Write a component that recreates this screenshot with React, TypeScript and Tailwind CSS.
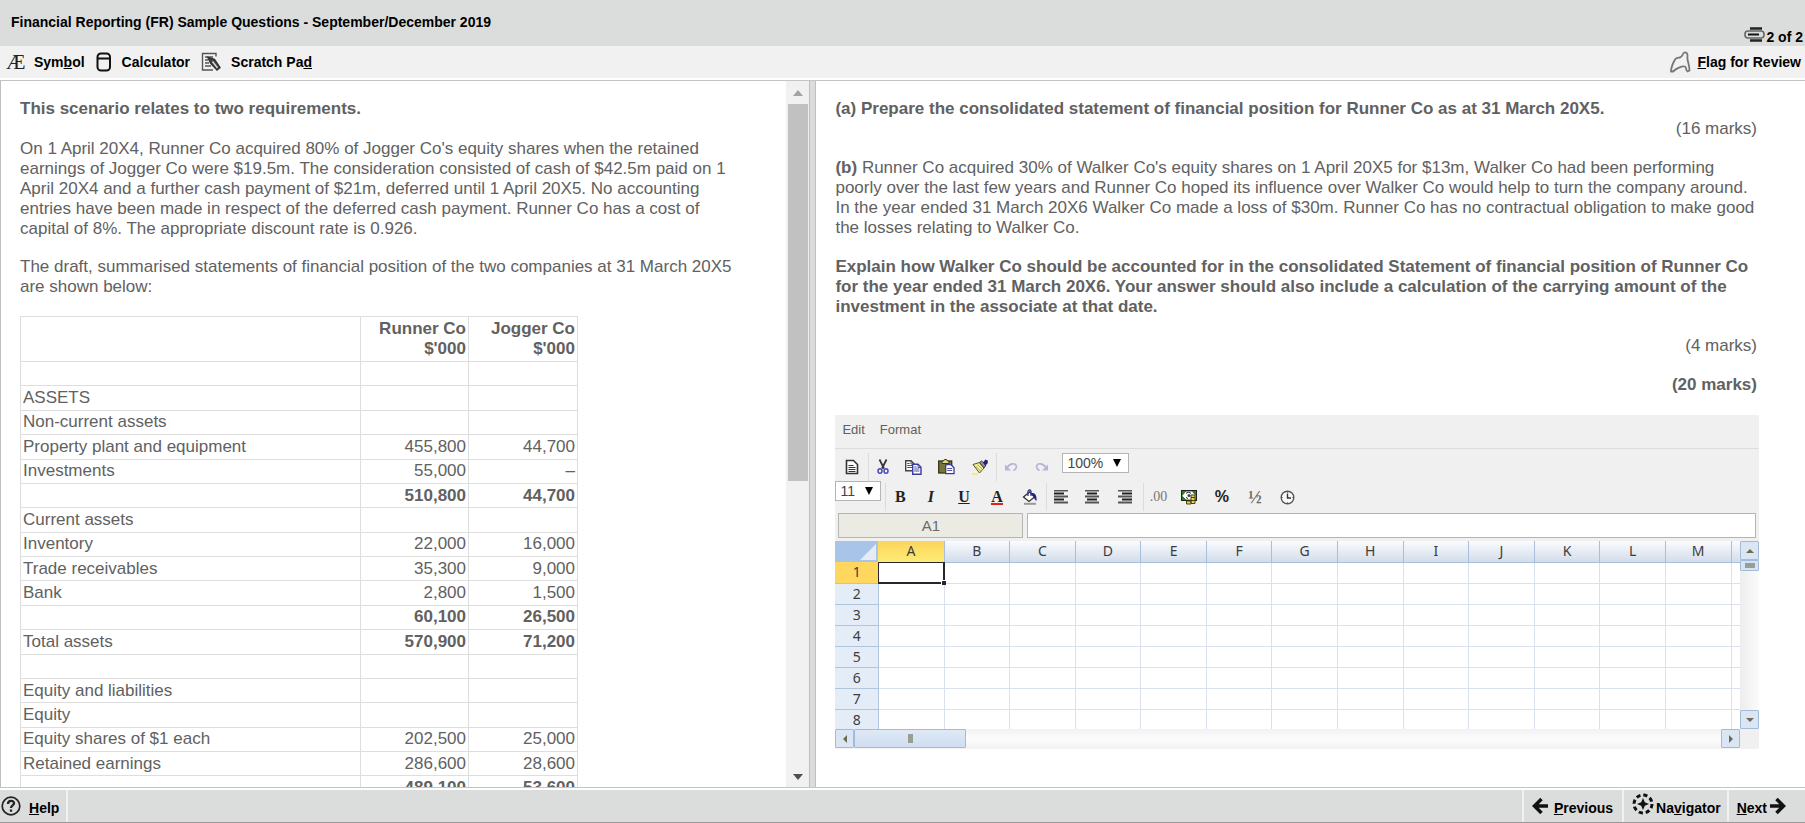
import React from "react";

type Row = [string, string, string, boolean?];
const rows: Row[] = [
  ["", "", ""],
  ["ASSETS", "", ""],
  ["Non-current assets", "", ""],
  ["Property plant and equipment", "455,800", "44,700"],
  ["Investments", "55,000", "–"],
  ["", "510,800", "44,700", true],
  ["Current assets", "", ""],
  ["Inventory", "22,000", "16,000"],
  ["Trade receivables", "35,300", "9,000"],
  ["Bank", "2,800", "1,500"],
  ["", "60,100", "26,500", true],
  ["Total assets", "570,900", "71,200", true],
  ["", "", ""],
  ["Equity and liabilities", "", ""],
  ["Equity", "", ""],
  ["Equity shares of $1 each", "202,500", "25,000"],
  ["Retained earnings", "286,600", "28,600"],
  ["", "489,100", "53,600", true],
];
const columns = "ABCDEFGHIJKLM".split("");
const sheetRows = [1, 2, 3, 4, 5, 6, 7, 8];

function Tool({ label, first, children }: { label: string; first?: boolean; children: React.ReactNode }) {
  return (
    <button aria-label={label} title={label} className={`flex h-7 items-center justify-center ${first ? "w-7" : "w-[33px]"}`}>
      {children}
    </button>
  );
}

const Divider = () => <div className="ml-[2px] h-7 w-px bg-[#dcdcdc]" />;

function Drop({ label, value, className }: { label: string; value: string; className: string }) {
  return (
    <div className={`relative h-5 ${className}`}>
      <select aria-label={label} className="block h-5 w-full appearance-none border border-[#b5b5b5] bg-white pl-1 text-sm leading-[18px] text-[#444]">
        <option>{value}</option>
      </select>
      <svg width="8" height="8" className="pointer-events-none absolute top-[6px] right-2" fill="#000">
        <path d="M0 0h8l-4 8z" />
      </svg>
    </div>
  );
}

const Align = ({ from, to }: { from: number; to: number }) => (
  <svg width="16" height="14">
    {[1, 4, 7, 10, 13].map((y, i) => (
      <line key={y} x1={i % 2 ? from : 1} x2={i % 2 ? to : 15} y1={y - 0.5} y2={y - 0.5} stroke={i % 2 ? "#222" : "#555"} strokeWidth="2" />
    ))}
  </svg>
);

const Page = ({ x, y, c }: { x: number; y: number; c: string }) => (
  <g transform={`translate(${x} ${y})`}>
    <path d="M.7 .7h5.300l3 3v7h-8.300z" fill="#fff" stroke={c} strokeWidth="1.400" />
    <path d="M2.200 3.500h2.500M2.200 5.500h5.200M2.200 7.500h5.200M6 1v3h3" fill="none" stroke={c} strokeWidth=".9" />
  </g>
);

function ScrollButton({ label, d, className }: { label: string; d: string; className?: string }) {
  return (
    <button aria-label={label} className={`flex h-[19px] w-[19px] shrink-0 items-center justify-center rounded-[1px] border border-[#a3bbd8] bg-[#dbe6f4] ${className ?? ""}`}>
      <svg width="8" height="8" fill="#6b6e50">
        <path d={d} />
      </svg>
    </button>
  );
}

function Spreadsheet() {
  return (
    <div className="mt-5 bg-[#f0f0f0]">
      <div className="flex h-[34px] gap-[15px] border-b border-[#dcdcdc] pt-[5px] pl-[7px] text-[13px]">
        <button className="h-5">Edit</button>
        <button className="h-5">Format</button>
      </div>
      <div className="flex h-8 items-start pt-1">
        <Tool label="New">
          <svg width="14" height="16" fill="#fff" stroke="#333" strokeWidth="1.600">
            <path d="M1.500 1.500h7l4 4v9h-11z" />
            <path d="M3.500 6.500h5M3.500 8.500h7M3.500 10.500h7M3.500 12.500h7" strokeWidth="1" />
          </svg>
        </Tool>
        <div className="h-7 w-px bg-[#dcdcdc]" />
        <Tool label="Cut" first>
          <svg width="12" height="16" fill="none">
            <path d="M2.500 .5L7 9.500M9.500 .5L5 9.500" stroke="#333" strokeWidth="1.700" />
            <ellipse cx="3" cy="12" rx="2" ry="2.300" stroke="#4a4ab4" strokeWidth="1.500" />
            <ellipse cx="9" cy="12" rx="2" ry="2.300" stroke="#4a4ab4" strokeWidth="1.500" />
          </svg>
        </Tool>
        <Tool label="Copy">
          <svg width="17" height="15">
            <Page x={0} y={0} c="#444" />
            <Page x={7} y={3.5} c="#3b3b9c" />
          </svg>
        </Tool>
        <Tool label="Paste">
          <svg width="17" height="16">
            <rect x=".7" y="2" width="13" height="12" fill="#77753a" stroke="#35341c" strokeWidth="1.300" />
            <path d="M4 4.500V2h1.500L6.500 .5h2L9.500 2H11v2.500z" fill="#e0dc82" stroke="#333" />
            <g transform="translate(7 5)">
              <path d="M.7 .7h5.300l3 3v6h-8.300z" fill="#fff" stroke="#3b3b9c" strokeWidth="1.300" />
              <path d="M2.200 4.500h5M2.200 6.500h5" stroke="#3b3b9c" strokeWidth=".9" />
            </g>
          </svg>
        </Tool>
        <Tool label="Format painter">
          <svg width="18" height="16">
            <path d="M1 15h6" stroke="#f2ea60" strokeWidth="1.500" />
            <path d="M2 5.500L8.500 3.500 13 9 8.500 14z" fill="#f4eda0" stroke="#55552e" />
            <path d="M4.500 7l5 5M6.500 5.500l5 5" stroke="#b8ad30" />
            <path d="M8.500 3.500l2-1.500 4.500 4-2 3z" fill="#999" stroke="#333" />
            <path d="M12 3.500L14.500 .5l2.500 1.200-.5 3-2.500 1.800z" fill="#23237e" />
          </svg>
        </Tool>
        <div className="h-7 w-px bg-[#dcdcdc]" />
        <Tool label="Undo" first>
          <svg width="14" height="10" fill="none" stroke="#b4b4d8" strokeWidth="1.600">
            <path d="M3 6C5 1.500 12 0 12.500 4.500c0 2-1 3-3 4" />
            <path d="M1 2.500v6h6z" fill="#b4b4d8" stroke="none" />
          </svg>
        </Tool>
        <Tool label="Redo">
          <svg width="14" height="10" fill="none" stroke="#b4b4d8" strokeWidth="1.600">
            <path d="M11 6C9 1.500 2 0 1.500 4.500c0 2 1 3 3 4" />
            <path d="M13 2.500v6H7z" fill="#b4b4d8" stroke="none" />
          </svg>
        </Tool>
        <Drop label="Zoom" value="100%" className="ml-1 w-[67px]" />
      </div>
      <div className="flex h-8 items-start font-['Liberation_Serif',serif] text-base text-[#222]">
        <Drop label="Font size" value="11" className="w-[46px] font-['Liberation_Sans',Arial,sans-serif]" />
        <div className="flex pt-[2px] pl-[2px]">
          <Divider />
          <Tool label="Bold" first><b>B</b></Tool>
          <Tool label="Italic"><b><i>I</i></b></Tool>
          <Tool label="Underline"><b><u>U</u></b></Tool>
          <Tool label="Font colour"><b className="border-b-2 border-[#e02020] leading-[13px]">A</b></Tool>
          <Tool label="Fill colour">
            <svg width="16" height="16">
              <path d="M2 14.800h12" stroke="#999" strokeWidth="2" />
              <path d="M1.500 8L7.500 3l5 5-5.500 4.500z" fill="#fff" stroke="#333" strokeWidth="1.300" />
              <path d="M6 7V2.500C6 .5 9 .5 9 2.500V7" fill="none" stroke="#35358c" strokeWidth="1.300" />
              <path d="M9 4c4-.5 6 2 5.500 8-2-1-2.500-4-3.500-5z" fill="#23237e" />
            </svg>
          </Tool>
          <div className="h-7 w-px bg-[#dcdcdc]" />
          <Tool label="Align left" first><Align from={1} to={11} /></Tool>
          <Tool label="Align centre"><Align from={3} to={13} /></Tool>
          <Tool label="Align right"><Align from={5} to={15} /></Tool>
          <Divider />
          <Tool label="Decimal places" first><span className="text-sm text-[#777]">.00</span></Tool>
          <Tool label="Currency">
            <svg width="16" height="15">
              <rect x=".7" y=".7" width="14.600" height="9.600" fill="#fff" stroke="#222" strokeWidth="1.400" />
              <path d="M1.500 1.500h3L1.500 5zM14.500 1.500h-3l3 3.500zM1.500 9.500V6.500l3 3z" fill="#2c7a2c" stroke="#2c7a2c" />
              <path d="M5 3.500c1-1.500 4-1.500 5 0M5 7.500l2 1" fill="none" stroke="#222" />
              <circle cx="8" cy="5.500" r="1.500" fill="#444" />
              <path d="M10 5h4v8.500h-4zM5.500 11h4.500v3H5.500z" fill="#e2d24a" stroke="#4c4515" />
              <path d="M10 7.500h4M10 10.500h4" stroke="#4c4515" />
            </svg>
          </Tool>
          <Tool label="Percent"><b className="font-['Liberation_Sans',Arial,sans-serif]">%</b></Tool>
          <Tool label="Fraction"><span className="text-lg font-bold text-[#666]">½</span></Tool>
          <Tool label="Time">
            <svg width="15" height="15" fill="#fafafa" stroke="#555" strokeWidth="1.400">
              <circle cx="7.500" cy="7.500" r="6.300" />
              <path d="M7.500 3.500V8h3.500" fill="none" stroke="#333" />
              <path d="M7.500 1.500v1.200M7.500 12.300v1.200M1.500 7.500h1.200M12.300 7.500h1.200" strokeWidth="1" />
            </svg>
          </Tool>
        </div>
      </div>
      <div className="flex gap-1 px-[3px] pb-[3px]">
        <input aria-label="Cell reference" readOnly defaultValue="A1" className="h-[25px] w-[185px] border border-[#b5b5b5] bg-[#ebebe4] text-center text-[15px] text-[#6b6b6b]" />
        <input aria-label="Formula" className="h-[25px] min-w-0 flex-1 border border-[#b5b5b5] bg-white px-1 text-[15px]" />
      </div>
      <div className="flex h-[188px]">
        <div className="min-w-0 flex-1 overflow-hidden bg-white font-['Noto_Sans',sans-serif] text-sm leading-[18px] text-[#3c3c3c]">
          <table className="w-full table-fixed border-collapse">
            <thead>
              <tr className="h-[21px] bg-linear-to-b from-[#fafcfe] to-[#d3dcea]">
                <td className="w-[43px] bg-[#a9c4e9] p-0">
                  <svg width="16" height="16" className="mr-[2px] ml-auto"><path d="M16 0v16H0z" fill="#e6ecf4" /></svg>
                </td>
                {columns.map((c) => (
                  <th key={c} scope="col" className={`border-r border-b border-[#a9bfd9] p-0 font-normal ${c === "A" ? "bg-linear-to-b from-[#fbd55c] to-[#ffeb74]" : ""}`}>
                    {c}
                  </th>
                ))}
                <td className="w-[9px] border-b border-[#a9bfd9] p-0" />
              </tr>
            </thead>
            <tbody>
              {sheetRows.map((r) => (
                <tr key={r} className="h-[21px]">
                  <th scope="row" className={`border-r border-b border-[#b0c6de] p-0 font-normal ${r === 1 ? "bg-[#ffd75e]" : "bg-[#e4ecf7]"}`}>{r}</th>
                  {columns.map((c) => (
                    <td key={c} className="relative border-r border-b border-[#dae1ee] p-0">
                      {r === 1 && c === "A" && (
                        <div className="absolute -inset-px border-t border-r-2 border-b-2 border-l border-[#26262e]">
                          <div className="absolute -right-[3px] -bottom-[3px] h-[5px] w-[5px] border-t border-l border-white bg-[#26262e]" />
                        </div>
                      )}
                    </td>
                  ))}
                  <td className="border-b border-[#dae1ee] p-0" />
                </tr>
              ))}
            </tbody>
          </table>
        </div>
        <div className="flex w-[19px] flex-col bg-linear-to-r from-[#ededed] to-[#fbfbfb]">
          <ScrollButton label="Scroll up" d="M0 6l4-4 4 4z" />
          <div className="flex h-[11px] items-center justify-center rounded-[1px] border border-[#a3bbd8] bg-[#d6e3f3]">
            <div className="h-[5px] w-[10px] bg-[#999e94]" />
          </div>
          <ScrollButton label="Scroll down" d="M0 2l4 4 4-4z" className="mt-auto" />
        </div>
      </div>
      <div className="flex h-5 pr-[19px]">
        <div className="flex flex-1 bg-linear-to-b from-[#f2f2f2] via-[#fcfcfc] to-[#f2f2f2]">
          <ScrollButton label="Scroll left" d="M6 0l-4 4 4 4z" />
          <div className="flex h-[19px] w-[112px] items-center justify-center rounded-[1px] border border-[#a3bbd8] bg-linear-to-b from-[#dfe9f6] to-[#cfdef0]">
            <div className="h-[9px] w-[5px] bg-[#999e94]" />
          </div>
          <ScrollButton label="Scroll right" d="M2 0l4 4-4 4z" className="ml-auto" />
        </div>
      </div>
    </div>
  );
}

export default function App() {
  return (
    <div className="flex h-screen flex-col overflow-hidden bg-white font-['Liberation_Sans',Arial,sans-serif] text-black">
      <header className="flex h-[46px] shrink-0 justify-between bg-[#dbdddc] text-sm font-bold">
        <h1 className="pt-3 pl-[11px] leading-5">Financial Reporting (FR) Sample Questions - September/December 2019</h1>
        <div className="flex items-end pr-[2px]">
          <svg width="22" height="18" fill="none" className="mb-[2px]">
            <path d="M6 2.500h12M6 14.500h12" stroke="#222" strokeWidth="2.500" />
            <rect x="1" y="5" width="19" height="7" rx="3" stroke="#666" strokeWidth="1.600" />
            <path d="M4 8.500h11" stroke="#111" strokeWidth="2" />
          </svg>
          <span className="leading-[18px]">2 of 2</span>
        </div>
      </header>
      <nav className="flex h-8 shrink-0 items-center justify-between bg-[#f1f1f1] text-sm font-bold">
        <div className="flex items-center">
          <button className="flex items-center">
            <span className="w-[34px] pl-[6px] text-left font-['Liberation_Serif',serif] text-[22px] leading-6 font-normal text-[#222]">Æ</span>
            <span>Sym<u>b</u>ol</span>
          </button>
          <button className="flex items-center pl-[11px]">
            <svg width="26" height="20" fill="none" stroke="#111" strokeWidth="2">
              <rect x="1.500" y="1.500" width="12.500" height="17" rx="3.500" />
              <path d="M2 6.500h12" />
            </svg>
            <span>Calculator</span>
          </button>
          <button className="flex items-center pl-[11px]">
            <svg width="30" height="20" fill="none" stroke="#555" strokeWidth="1.400">
              <path d="M15 4.500V1.500H1.500v16.500H12M4 5h8M4 8h3M4 11h4M4 14h6" />
              <path d="M7 5.500l6.500 1.800L19 15.500l-3 2.500-6.500-7z" fill="#444" stroke="#333" />
              <path d="M11.500 9.500l5 6.500" stroke="#ddd" />
            </svg>
            <span>Scratch Pa<u>d</u></span>
          </button>
        </div>
        <button className="flex items-center pr-1">
          <svg width="28" height="22" fill="none" stroke="#777" strokeWidth="1.800">
            <path d="M1 20.500C1 16 2.500 13 5 8.500c1-1.500 2.500-1.500 5-2 2.500-.5 2.500-4.500 4.500-5 2-.3 3 1 3 3 0 2-.5 3.500.5 6 .8 3 1.500 6 1.500 9l-2 1c-2-.5-.5-4-2.500-5-3-.8-9 2-12 5z" strokeLinejoin="round" />
          </svg>
          <span><u>F</u>lag for Review</span>
        </button>
      </nav>
      <main className="mt-[2px] flex min-h-0 flex-1 border-y border-[#c4c4c4] text-[17px] leading-5 text-[#616161]">
        <section className="flex w-[44.900%] border-x border-[#bfbfbf]">
          <div className="min-w-0 flex-1 overflow-y-auto pt-[18px] pr-[45px] pl-[19px] [scrollbar-width:none]">
            <h2 className="font-bold">This scenario relates to two requirements.</h2>
            <p className="mt-5">
              On 1 April 20X4, Runner Co acquired 80% of Jogger Co's equity shares when the retained earnings of Jogger Co were $19.5m. The consideration consisted of cash of $42.5m paid on 1 April 20X4 and a further cash payment of $21m, deferred until 1 April 20X5. No accounting entries have been made in respect of the deferred cash payment. Runner Co has a cost of capital of 8%. The appropriate discount rate is 0.926.
            </p>
            <p className="mt-[18px]">
              The draft, summarised statements of financial position of the two companies at 31 March 20X5 are shown below:
            </p>
            <table className="mt-[19px] h-[485px] w-[558px] table-fixed border-collapse">
              <thead>
                <tr className="align-top font-bold">
                  <td className="w-[340px] border border-[#dedede]" />
                  <th scope="col" className="w-[108px] border border-[#dedede] p-[2px] text-right">Runner Co<br />$'000</th>
                  <th scope="col" className="border border-[#dedede] p-[2px] text-right">Jogger Co<br />$'000</th>
                </tr>
              </thead>
              <tbody>
                {rows.map(([name, runner, jogger, bold], i) => (
                  <tr key={i}>
                    <td className="h-6 border border-[#dedede] px-[2px]">{name}</td>
                    <td className={`border border-[#dedede] px-[2px] text-right ${bold ? "font-bold" : ""}`}>{runner}</td>
                    <td className={`border border-[#dedede] px-[2px] text-right ${bold ? "font-bold" : ""}`}>{jogger}</td>
                  </tr>
                ))}
              </tbody>
            </table>
          </div>
          <div className="flex w-[23px] flex-col items-center bg-[#f1f1f1]">
            <svg width="12" height="23" fill="#a3a3a3"><path d="M1 15l5-6 5 6z" /></svg>
            <div className="h-[377px] w-5 bg-[#c1c1c1]" />
            <svg width="12" height="22" fill="#505050" className="mt-auto"><path d="M1 9l5 6 5-6z" /></svg>
          </div>
        </section>
        <div className="w-[5px] bg-[#dbdddc]" />
        <section className="min-w-0 flex-1 border-l border-[#bfbfbf] pt-[18px] pr-[46px] pl-[19px]">
          <h2 className="font-bold">(a) Prepare the consolidated statement of financial position for Runner Co as at 31 March 20X5.</h2>
          <p className="pr-[2px] text-right">(16 marks)</p>
          <p className="mt-[19px]">
            <b>(b)</b> Runner Co acquired 30% of Walker Co's equity shares on 1 April 20X5 for $13m, Walker Co had been performing poorly over the last few years and Runner Co hoped its influence over Walker Co would help to turn the company around. In the year ended 31 March 20X6 Walker Co made a loss of $30m. Runner Co has no contractual obligation to make good the losses relating to Walker Co.
          </p>
          <p className="mt-[19px] font-bold">
            Explain how Walker Co should be accounted for in the consolidated Statement of financial position of Runner Co for the year ended 31 March 20X6. Your answer should also include a calculation of the carrying amount of the investment in the associate at that date.
          </p>
          <p className="mt-[19px] pr-[2px] text-right">(4 marks)</p>
          <p className="mt-[19px] pr-[2px] text-right font-bold">(20 marks)</p>
          <Spreadsheet />
        </section>
      </main>
      <footer className="mt-[2px] flex h-[33px] shrink-0 items-stretch justify-between border-b border-[#999] bg-[#dbdddc] text-sm font-bold">
        <button className="flex items-center border-r-2 border-[#f1f1f1] pr-[7px]">
          <svg width="22" height="20" fill="none" stroke="#222" className="mr-[7px]">
            <circle cx="11" cy="10" r="8.800" strokeWidth="1.700" />
            <path d="M8 8c0-4 6-4 6-.8 0 2.300-3 2-3 4.800M11 13.500v2.200" strokeWidth="2.300" />
          </svg>
          <span className="pt-1"><u>H</u>elp</span>
        </button>
        <div className="flex items-stretch pr-[18px]">
          <button className="flex items-center border-l-2 border-[#f1f1f1] pr-[9px] pl-2">
            <svg width="22" height="18" fill="none" stroke="#111" strokeWidth="3.500"><path d="M16 9H3M9.500 2L2.500 9l7 7" /></svg>
            <span className="pt-1"><u>P</u>revious</span>
          </button>
          <button className="flex items-center border-l-2 border-[#f1f1f1] pr-[6px] pl-2">
            <svg width="24" height="22" fill="none" className="mb-1">
              <circle cx="11" cy="11" r="9" stroke="#111" strokeWidth="3" strokeDasharray="4.200 2.869" />
              <path d="M11 5l1.800 4.200L17 11l-4.200 1.800L11 17l-1.800-4.200L5 11l4.200-1.800z" fill="#111" />
            </svg>
            <span className="pt-1">Na<u>v</u>igator</span>
          </button>
          <button className="flex items-center border-l-2 border-[#f1f1f1] pl-2">
            <span className="pt-1"><u>N</u>ext</span>
            <svg width="20" height="18" fill="none" stroke="#111" strokeWidth="3.500"><path d="M3 9h13M9.500 2l7 7-7 7" /></svg>
          </button>
        </div>
      </footer>
    </div>
  );
}
